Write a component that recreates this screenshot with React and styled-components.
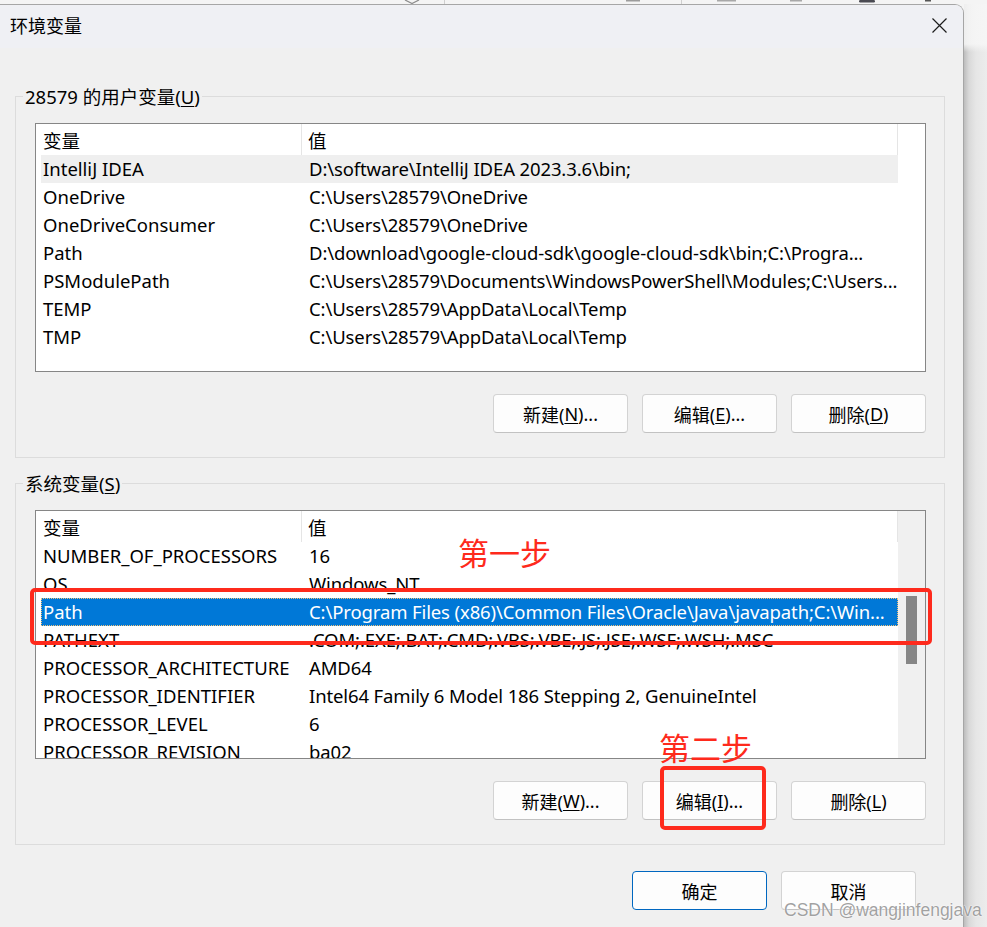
import React from "react";
import styled, { createGlobalStyle } from "styled-components";

const GlobalStyle = createGlobalStyle`
  html, body {
    margin: 0;
    padding: 0;
  }
  body {
    background: #f4f4f4;
    font-family: "Noto Sans", "Noto Sans CJK SC", sans-serif;
    color: #000;
  }
`;

const userVars = [
  ["IntelliJ IDEA", "D:\\software\\IntelliJ IDEA 2023.3.6\\bin;"],
  ["OneDrive", "C:\\Users\\28579\\OneDrive"],
  ["OneDriveConsumer", "C:\\Users\\28579\\OneDrive"],
  ["Path", "D:\\download\\google-cloud-sdk\\google-cloud-sdk\\bin;C:\\Progra..."],
  ["PSModulePath", "C:\\Users\\28579\\Documents\\WindowsPowerShell\\Modules;C:\\Users..."],
  ["TEMP", "C:\\Users\\28579\\AppData\\Local\\Temp"],
  ["TMP", "C:\\Users\\28579\\AppData\\Local\\Temp"],
];

const sysVars = [
  ["NUMBER_OF_PROCESSORS", "16"],
  ["OS", "Windows_NT"],
  ["Path", "C:\\Program Files (x86)\\Common Files\\Oracle\\Java\\javapath;C:\\Win..."],
  ["PATHEXT", ".COM;.EXE;.BAT;.CMD;.VBS;.VBE;.JS;.JSE;.WSF;.WSH;.MSC"],
  ["PROCESSOR_ARCHITECTURE", "AMD64"],
  ["PROCESSOR_IDENTIFIER", "Intel64 Family 6 Model 186 Stepping 2, GenuineIntel"],
  ["PROCESSOR_LEVEL", "6"],
  ["PROCESSOR_REVISION", "ba02"],
];

function App() {
  return (
    <Desktop>
      <GlobalStyle />
      <BackStrip width='987' height='4' viewBox='0 0 987 4'>
        <path d='M405 0 L412 3.5 L419 0' stroke='#8a8a8a' strokeWidth='1.2' fill='none' />
        <rect x='444' y='0' width='1' height='4' fill='#cfcfcf' />
        <rect x='626' y='0' width='14' height='1.5' fill='#9c9c9c' />
        <rect x='681' y='0' width='1' height='4' fill='#cfcfcf' />
        <rect x='717' y='0' width='19' height='1.5' fill='#a8a8a8' />
        <rect x='790' y='0' width='12' height='1.5' fill='#a8a8a8' />
        <rect x='859' y='0' width='16' height='2.5' rx='1.2' fill='#4a4a52' />
        <rect x='925' y='0' width='6' height='1.5' fill='#555' />
      </BackStrip>
      <Stage>
        <Dialog>
          <TitleBar>
            <span>环境变量</span>
            <svg width='15' height='15' viewBox='0 0 15 15'>
              <path d='M0.5 0.5 L14.5 14.5 M14.5 0.5 L0.5 14.5' stroke='#1c1c1c' strokeWidth='1.2' />
            </svg>
          </TitleBar>
          <Body>
            <GroupBox>
              <GroupTitle>
                28579 的用户变量(<u>U</u>)
              </GroupTitle>
              <VarList rows={userVars} hoverIndex={0} />
              <ButtonRow>
                <Button>
                  新建(<u>N</u>)...
                </Button>
                <Button>
                  编辑(<u>E</u>)...
                </Button>
                <Button>
                  删除(<u>D</u>)
                </Button>
              </ButtonRow>
            </GroupBox>
            <GroupBox $gap>
              <GroupTitle>
                系统变量(<u>S</u>)
              </GroupTitle>
              <VarList rows={sysVars} selectedIndex={2} scroll={{ top: 85, size: 68 }} />
              <ButtonRow>
                <Button>
                  新建(<u>W</u>)...
                </Button>
                <Button>
                  编辑(<u>I</u>)...
                </Button>
                <Button>
                  删除(<u>L</u>)
                </Button>
              </ButtonRow>
            </GroupBox>
            <Footer>
              <Button $primary>确定</Button>
              <Button>取消</Button>
            </Footer>
          </Body>
        </Dialog>
        <Shadow />
      </Stage>

      {/* annotations drawn over the screenshot */}
      <Mark style={{ left: 30, top: 588, width: 902, height: 57 }} />
      <StepLabel style={{ left: 458, top: 535 }}>第一步</StepLabel>
      <StepLabel style={{ left: 659, top: 730 }}>第二步</StepLabel>
      <Mark style={{ left: 660, top: 766, width: 106, height: 64 }} />
      <Watermark>CSDN @wangjinfengjava</Watermark>
    </Desktop>
  );
}

function VarList({ rows, hoverIndex, selectedIndex, scroll }) {
  return (
    <ListView>
      <Columns>
        <Header>
          <HeaderCell>变量</HeaderCell>
          <HeaderCell>值</HeaderCell>
        </Header>
        {rows.map(([name, value], i) => (
          <Row key={name + i} $hover={i === hoverIndex} $selected={i === selectedIndex}>
            <NameCell>{name}</NameCell>
            <ValueCell>{value}</ValueCell>
          </Row>
        ))}
      </Columns>
      <Side $track={!!scroll}>
        {scroll && <Thumb style={{ marginTop: scroll.top, height: scroll.size }} />}
      </Side>
    </ListView>
  );
}

export default App;

const Desktop = styled.div`
  position: relative;
  width: 987px;
  height: 927px;
  overflow: hidden;
  background: #f4f4f4;
  display: flex;
  flex-direction: column;
`;

const BackStrip = styled.svg`
  display: block;
  flex: none;
`;

const Stage = styled.div`
  display: flex;
  flex: 1;
  min-height: 0;
`;

const Dialog = styled.div`
  flex: none;
  width: 964px;
  box-sizing: border-box;
  border-top: 1px solid #a6a6a6;
  border-right: 1px solid #a6a6a6;
  border-top-right-radius: 9px;
  background: #f0f0f0;
  overflow: hidden;
  display: flex;
  flex-direction: column;
`;

const Shadow = styled.div`
  flex: 1;
  background: linear-gradient(to bottom, rgba(247, 247, 247, 0.85) 0, rgba(247, 247, 247, 0.85) 40px, transparent 48px),
    linear-gradient(to right, #bdbdbd 0, #d9d9d9 5px, #e6e6e6 12px, #ececec 100%);
`;

const TitleBar = styled.div`
  height: 43px;
  flex: none;
  box-sizing: border-box;
  background: #eff0f4;
  display: flex;
  align-items: center;
  justify-content: space-between;
  padding: 0 16px 4px 10px;
  font-size: 18px;
  svg {
    display: block;
    margin-top: 1px;
  }
`;

const Body = styled.div`
  padding: 48px 18px 0 15px;
`;

const GroupBox = styled.div`
  border: 1px solid #dcdcdc;
  padding: 0 18px 24px 19px;
  margin-top: ${(p) => (p.$gap ? "25px" : "0")};
`;

const GroupTitle = styled.div`
  width: fit-content;
  margin: -12px 0 14px -12px;
  padding: 0 2px;
  background: #f0f0f0;
  line-height: 24px;
  font-size: 18.5px;
  u {
    text-underline-offset: 2px;
  }
`;

const ListView = styled.div`
  height: 249px;
  box-sizing: border-box;
  border: 1px solid #868686;
  background: #fff;
  display: flex;
  overflow: hidden;
  font-size: 18.5px;
`;

const Columns = styled.div`
  width: 862px;
  flex: none;
`;

const Header = styled.div`
  height: 31px;
  display: grid;
  grid-template-columns: 266px 1fr;
`;

const HeaderCell = styled.div`
  border-right: 1px solid #e5e5e5;
  padding-left: 7px;
  display: flex;
  align-items: center;
  & + & {
    padding-left: 6px;
  }
`;

const Row = styled.div`
  height: 28px;
  margin-left: 5px;
  box-sizing: border-box;
  display: grid;
  grid-template-columns: 261px 1fr;
  align-items: center;
  white-space: nowrap;
  padding-bottom: 1px;
  background: ${(p) => (p.$selected ? "#0078d7" : p.$hover ? "#efefef" : "transparent")};
  color: ${(p) => (p.$selected ? "#fff" : "#000")};
  outline: ${(p) => (p.$selected ? "1px dotted #f3c27a" : "none")};
  outline-offset: -1px;
`;

const NameCell = styled.div`
  padding-left: 2px;
  overflow: hidden;
`;

const ValueCell = styled.div`
  padding-left: 7px;
  overflow: hidden;
  letter-spacing: -0.12px;
`;

const Side = styled.div`
  flex: 1;
  background: ${(p) => (p.$track ? "#f0f0f0" : "#fff")};
  display: flex;
  flex-direction: column;
  align-items: center;
`;

const Thumb = styled.div`
  width: 11px;
  background: #868686;
`;

const ButtonRow = styled.div`
  display: flex;
  justify-content: flex-end;
  gap: 14px;
  margin-top: 22px;
`;

const Footer = styled(ButtonRow)`
  margin-top: 26px;
  padding-right: 29px;
`;

const Button = styled.div`
  width: 135px;
  height: 39px;
  box-sizing: border-box;
  border: 1px solid ${(p) => (p.$primary ? "#0067c0" : "#d3d3d3")};
  border-bottom-color: ${(p) => (p.$primary ? "#0067c0" : "#c2c2c2")};
  border-radius: 4px;
  background: #fdfdfd;
  display: flex;
  align-items: center;
  justify-content: center;
  font-size: 18px;
  u {
    text-underline-offset: 2px;
  }
`;

const Mark = styled.div`
  position: absolute;
  box-sizing: border-box;
  border: 4px solid #fe2a1c;
  border-radius: 5px;
`;

const StepLabel = styled.div`
  position: absolute;
  font-family: "Noto Sans CJK SC", sans-serif;
  font-size: 31px;
  line-height: 34px;
  color: #fe2a1c;
`;

const Watermark = styled.div`
  position: absolute;
  left: 784px;
  top: 900px;
  font-family: "Liberation Sans", sans-serif;
  font-size: 17.5px;
  line-height: 20px;
  color: rgba(130, 130, 130, 0.75);
  text-shadow: 0 0 2px #fff, 0 0 1px #fff;
`;
